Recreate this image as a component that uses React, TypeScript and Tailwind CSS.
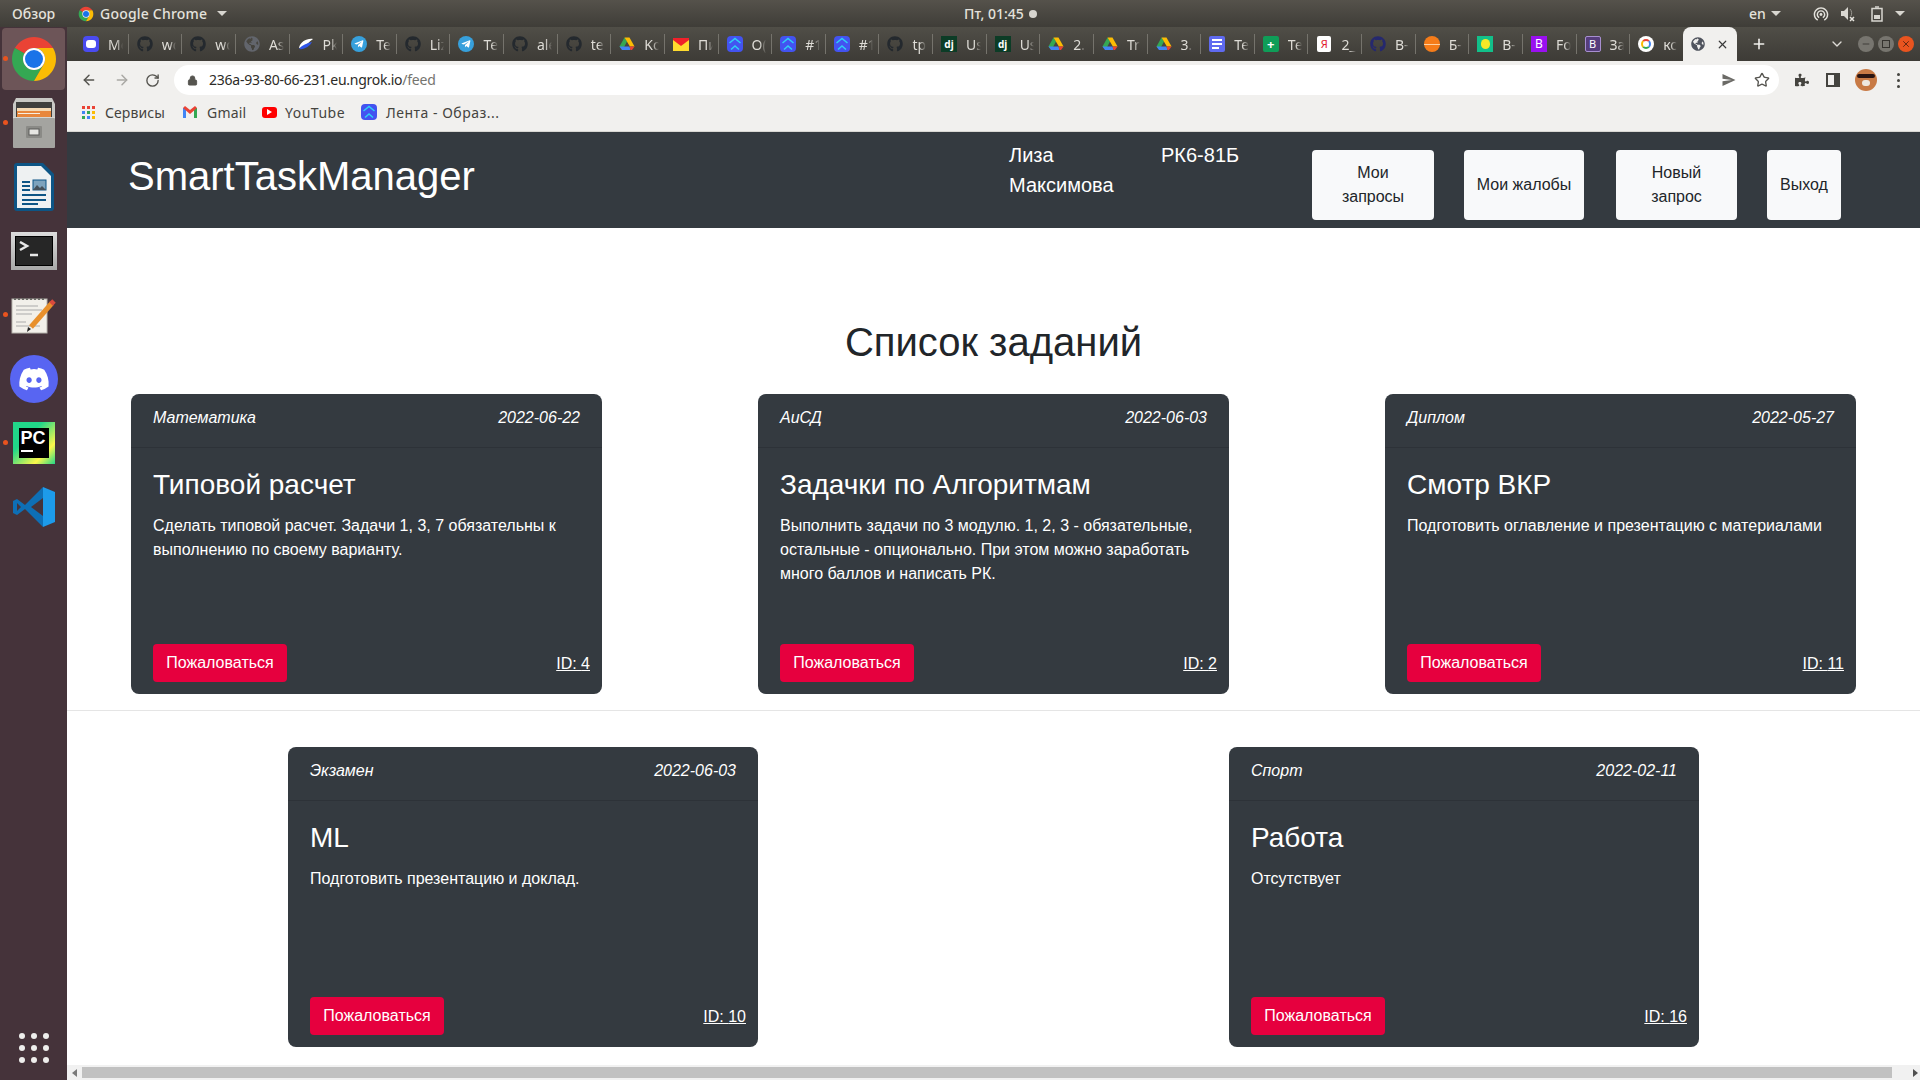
import { ArrowLeft, ArrowRight, ChevronDown, Lock, Minus, Plus, RotateCw, Star, X } from "lucide-react";
import { FaDiscord, FaGithub, FaPuzzlePiece, FaTelegramPlane, FaGlobeAmericas } from "react-icons/fa";
import { IoMdSend, IoMdWifi } from "react-icons/io";
import type { ReactNode } from "react";

const ui = "font-['Noto_Sans',sans-serif]";

function ChromeIcon({ size }: { size: number }) {
    return (
        <svg width={size} height={size} viewBox="0 0 48 48">
            <path fill="#ea4335" d="M4.95 13A22 22 0 0 1 43.05 13H24A11 11 0 0 0 14.47 18.5Z" />
            <path fill="#34a853" d="M4.95 13A22 22 0 0 0 24 46L33.53 29.5A11 11 0 0 1 14.47 18.5Z" />
            <path fill="#fbbc04" d="M24 46A22 22 0 0 0 43.05 13H24A11 11 0 0 1 33.53 29.5Z" />
            <circle cx="24" cy="24" r="11" fill="#fff" />
            <circle cx="24" cy="24" r="9" fill="#1a73e8" />
        </svg>
    );
}

function DriveIcon() {
    return (
        <svg width="16" height="16" viewBox="0 0 16 16">
            <path fill="#34a853" d="M5.5 1.5 8 5.5 3.5 14 .5 10.5Z" />
            <path fill="#fbbc04" d="M5.5 1.5h5l5 9h-4.6Z" />
            <path fill="#4285f4" d="M.5 10.5h10l1 3.5H3Z" />
            <path fill="#ea4335" d="M10.5 10.5h5L13 14h-1.5Z" />
        </svg>
    );
}

function ChevronsIcon() {
    return (
        <div className="w-4 h-4 rounded-[4px] bg-[#4353f0] flex items-center justify-center">
            <svg width="14" height="14" viewBox="0 0 14 14" fill="none" stroke="#2fd0f5" strokeWidth="1.5">
                <path d="M1.5 6 7 1.5 12.5 6" />
                <path d="M3 12.5 7 9l4 3.5" />
            </svg>
        </div>
    );
}

function TabIcon({ kind }: { kind: string }) {
    switch (kind) {
        case "chat":
            return (
                <div className="w-4 h-4 rounded-[4px] bg-[#4a4bf0] flex items-center justify-center">
                    <div className="w-[10px] h-2 rounded-[3px] bg-white" />
                </div>
            );
        case "github":
            return <FaGithub className="w-4 h-4 text-[#24292e]" />;
        case "globe":
            return <FaGlobeAmericas className="w-4 h-4 text-[#62656c]" />;
        case "pk":
            return (
                <svg width="16" height="16" viewBox="0 0 16 16">
                    <path fill="#fff" d="M1 12C2 6 9 2 15 3 12 5 7 11 1 12Z" />
                    <path fill="#2f55e8" d="M1 13C4 9 9 7 14 6 12 10 6 14 1 13Z" />
                </svg>
            );
        case "telegram":
            return (
                <div className="w-4 h-4 rounded-full bg-[#37a0dc] flex items-center justify-center">
                    <FaTelegramPlane className="w-[10px] h-[10px] text-white" />
                </div>
            );
        case "drive":
            return <DriveIcon />;
        case "ymail":
            return (
                <svg width="16" height="13" viewBox="0 0 16 13">
                    <rect width="16" height="13" fill="#ffdb2e" />
                    <path fill="#f0202a" d="M0 0h16v2L8 8 0 2Z" />
                </svg>
            );
        case "chevrons":
            return <ChevronsIcon />;
        case "dj":
            return <div className="w-4 h-4 bg-[#0c3c26] text-white text-[10px] font-bold leading-4 text-center">dj</div>;
        case "docs":
            return (
                <div className="w-4 h-4 rounded-[2px] bg-[#5f6af0] flex flex-col items-center justify-center gap-[2px]">
                    <div className="w-[10px] h-[2px] bg-white" />
                    <div className="w-[10px] h-[2px] bg-white" />
                    <div className="w-[7px] h-[2px] bg-white self-start ml-[3px]" />
                </div>
            );
        case "sheets":
            return <div className="w-4 h-4 rounded-[2px] bg-[#0f9d58] text-white text-[13px] font-bold leading-4 text-center">+</div>;
        case "yandex":
            return <div className="w-[14px] h-4 rounded-[2px] bg-white text-[#e1192d] text-[11px] leading-4 text-center">Я</div>;
        case "darkblob":
            return <FaGithub className="w-4 h-4 text-[#25286e]" />;
        case "orange":
            return (
                <div className="w-4 h-4 rounded-full bg-[#f57c1a] flex items-center">
                    <div className="w-full h-[1px] bg-[#ffd0a0]" />
                </div>
            );
        case "chick":
            return (
                <div className="w-4 h-4 bg-[#12c08a] flex items-center justify-center">
                    <div className="w-[9px] h-[10px] rounded-full bg-[#f6e826]" />
                </div>
            );
        case "bsolid":
            return <div className="w-4 h-4 bg-[#9a10f0] text-white text-[12px] leading-4 text-center">B</div>;
        case "boutline":
            return <div className="w-4 h-4 rounded-[2px] bg-[#563d7c] border border-[#a78fd0] text-white text-[11px] leading-[14px] text-center">B</div>;
        case "google":
            return (
                <div className="w-4 h-4 rounded-full bg-white flex items-center justify-center">
                    <div className="w-[10px] h-[10px] rounded-full border-2 border-t-[#ea4335] border-r-[#4285f4] border-b-[#34a853] border-l-[#fbbc04]" />
                </div>
            );
        default:
            return null;
    }
}

const tabs: [string, string][] = [
    ["chat", "Me"], ["github", "wo"], ["github", "wo"], ["globe", "As"], ["pk", "Pk"],
    ["telegram", "Te"], ["github", "Liz"], ["telegram", "Te"], ["github", "ale"], ["github", "te"],
    ["drive", "Ko"], ["ymail", "Пи"], ["chevrons", "O("], ["chevrons", "#1"], ["chevrons", "#1"],
    ["github", "tp"], ["dj", "Us"], ["dj", "Us"], ["drive", "2."], ["drive", "Tr"],
    ["drive", "3."], ["docs", "Те"], ["sheets", "Те"], ["yandex", "2_"], ["darkblob", "В-"],
    ["orange", "Б-"], ["chick", "В-"], ["bsolid", "Fo"], ["boutline", "За"], ["google", "кс"],
];

function Caret() {
    return <div className="w-0 h-0 border-x-[5px] border-x-transparent border-t-[5px] border-t-[#d8d6d0]" />;
}

function TopBar() {
    return (
        <div className={`${ui} h-[27px] flex items-center bg-gradient-to-b from-[#55524b] to-[#3f3d38] text-[#e4e2dc] text-[14px] font-medium`}>
            <span className="ml-3 w-[66px]">Обзор</span>
            <ChromeIcon size={16} />
            <span className="ml-[6px] w-[110px] whitespace-nowrap tracking-[0.2px]">Google Chrome</span>
            <div className="ml-[7px]"><Caret /></div>
            <div className="ml-[737px] w-[65px] whitespace-nowrap">Пт, 01:45</div>
            <div className="w-2 h-2 rounded-full bg-[#d8d6d0]" />
            <span className="ml-[712px] w-4">en</span>
            <div className="ml-[6px]"><Caret /></div>
            <IoMdWifi className="ml-[31px] w-[18px] h-[18px]" />
            <svg className="ml-[10px]" width="16" height="16" viewBox="0 0 16 16" fill="#d8d6d0">
                <path d="M1 5h3l4-4v13l-4-4H1Z" />
                <path d="M10 11l4 4m0-4-4 4" stroke="#e8e6e0" strokeWidth="1.5" />
                <path d="M10 3c2 2 2 5 1 7" fill="none" stroke="#9a9892" />
            </svg>
            <svg className="ml-[15px]" width="12" height="16" viewBox="0 0 12 16" fill="none" stroke="#d8d6d0" strokeWidth="1.5">
                <rect x="1" y="2.5" width="10" height="12.5" />
                <path d="M4 1h4" />
                <rect x="3" y="9" width="6" height="4" fill="#d8d6d0" stroke="none" />
            </svg>
            <div className="ml-3"><Caret /></div>
        </div>
    );
}

function TabStrip() {
    return (
        <div className={`${ui} h-[34px] flex items-center bg-gradient-to-b from-[#504e47] to-[#3d3b36] text-[#dedcd6] text-[14px]`}>
            <div className="w-[8px]" />
            {tabs.map(([kind, label], i) => (
                <div key={i} className="w-[53.63px] h-[20px] flex items-center border-r border-[#75736c] pl-2 pr-[5px] shrink-0">
                    <div className="w-4 flex justify-center shrink-0">
                        <TabIcon kind={kind} />
                    </div>
                    <span className="ml-[9px] overflow-hidden whitespace-nowrap [mask-image:linear-gradient(to_right,black_55%,transparent)]">{label}</span>
                </div>
            ))}
            <div className="ml-[-1px] self-stretch w-[54px] rounded-t-[8px] bg-[#f1f0ee] flex items-center justify-center gap-[11px]">
                <FaGlobeAmericas className="w-[14px] h-[14px] text-[#50545e]" />
                <X className="w-[13px] h-[13px] text-[#3a3a3a]" strokeWidth={2.2} />
            </div>
            <Plus className="ml-[14px] w-4 h-4 text-[#f0efeb]" strokeWidth={2.4} />
            <ChevronDown className="ml-[62px] w-4 h-4 text-[#dedcd6]" />
            <div className="ml-[13px] w-4 h-4 rounded-full bg-[#77756f] flex items-center justify-center">
                <Minus className="w-[10px] h-[10px] text-[#35332f]" />
            </div>
            <div className="ml-1 w-4 h-4 rounded-full bg-[#77756f] flex items-center justify-center">
                <div className="w-2 h-2 border border-[#35332f]" />
            </div>
            <div className="ml-1 w-4 h-4 rounded-full bg-[#e9541f] flex items-center justify-center">
                <X className="w-[10px] h-[10px] text-[#4c2010]" />
            </div>
        </div>
    );
}

function Toolbar() {
    return (
        <div className={`${ui} h-[34px] bg-[#f1f0ee] flex items-end text-[#45443f]`}>
            <div className="h-[30px] flex items-center">
                <ArrowLeft className="ml-[14px] w-4 h-4 text-[#55544f]" strokeWidth={2.2} />
                <ArrowRight className="ml-[17px] w-4 h-4 text-[#a9a8a4]" strokeWidth={2.2} />
                <RotateCw className="ml-[15px] w-[15px] h-[15px] text-[#55544f]" strokeWidth={2.2} />
            </div>
            <div className="ml-[14px] w-[1605px] h-[30px] rounded-full bg-white flex items-center">
                <Lock className="ml-[13px] w-[11px] h-[13px] text-[#55544f]" fill="#55544f" />
                <span className="ml-[11px] pb-[1px] text-[14px] tracking-[-0.25px] text-[#2c2b28]">
                    236a-93-80-66-231.eu.ngrok.io<span className="text-[#75746f]">/feed</span>
                </span>
                <IoMdSend className="ml-auto w-4 h-4 text-[#6b6a66]" />
                <Star className="ml-[17px] mr-[9px] w-4 h-4 text-[#55544f]" strokeWidth={2} />
            </div>
            <div className="h-[30px] flex items-center">
                <FaPuzzlePiece className="ml-[16px] w-[14px] h-[14px] text-[#45443f]" />
                <div className="ml-[17px] w-[14px] h-[14px] border-2 border-[#45443f] border-r-[6px]" />
                <div className="ml-[15px] w-[22px] h-[22px] rounded-full bg-[#c87a45] flex flex-col items-center justify-center overflow-hidden">
                    <div className="w-[18px] h-[4px] rounded-sm bg-[#2a1512]" />
                    <div className="mt-[2px] w-[8px] h-[6px] bg-[#eee8e0] rounded-full" />
                </div>
                <div className="ml-[20px] flex flex-col gap-[3px]">
                    <div className="w-[3px] h-[3px] rounded-full bg-[#45443f]" />
                    <div className="w-[3px] h-[3px] rounded-full bg-[#45443f]" />
                    <div className="w-[3px] h-[3px] rounded-full bg-[#45443f]" />
                </div>
            </div>
        </div>
    );
}

function Bookmarks() {
    const appColors = ["#ea4335", "#ea4335", "#ea4335", "#4285f4", "#34a853", "#fbbc04", "#34a853", "#4285f4", "#fbbc04"];
    return (
        <div className={`${ui} h-[37px] pb-[2px] bg-[#f1f0ee] border-b border-[#d8d7d3] flex items-center text-[14px] text-[#45443f]`}>
            <div className="ml-[15px] grid grid-cols-3 gap-[2px]">
                {appColors.map((c, i) => (
                    <div key={i} className="w-[3px] h-[3px]" style={{ backgroundColor: c }} />
                ))}
            </div>
            <span className="ml-[10px] w-[78px] tracking-[0.1px]">Сервисы</span>
            <svg width="14" height="12" viewBox="0 0 14 12">
                <path fill="#4285f4" d="M0 2h3v10H0Z" />
                <path fill="#34a853" d="M11 2h3v10h-3Z" />
                <path fill="#ea4335" d="M0 2l2-2 5 4 5-4 2 2-7 6Z" />
            </svg>
            <span className="ml-[10px] w-[55px] tracking-[0.2px]">Gmail</span>
            <div className="w-[15px] h-[11px] rounded-[3px] bg-[#f00] flex items-center justify-center">
                <div className="w-0 h-0 border-y-[3px] border-y-transparent border-l-[5px] border-l-white" />
            </div>
            <span className="ml-2 w-[76px] tracking-[0.5px]">YouTube</span>
            <ChevronsIcon />
            <span className="ml-[9px] tracking-[0.5px]">Лента - Образ...</span>
        </div>
    );
}

function Slot({ dot, active, children }: { dot?: boolean; active?: boolean; children: ReactNode }) {
    return (
        <div className="relative h-[64px] flex items-center justify-center">
            {active && <div className="absolute inset-x-[2px] inset-y-[1px] rounded-[4px] bg-[#6d5558]" />}
            {dot && <div className="absolute left-[3px] top-[29px] w-[5px] h-[5px] rounded-full bg-[#e9541f]" />}
            <div className="relative">{children}</div>
        </div>
    );
}

function Dock() {
    const dots = Array.from({ length: 9 });
    return (
        <div className="w-[67px] shrink-0 bg-[#45333a] flex flex-col">
            <Slot dot active>
                <ChromeIcon size={48} />
            </Slot>
            <Slot dot>
                <svg width="42" height="50" viewBox="0 0 42 50">
                    <path fill="#c9c9c5" d="M3 0h36l3 6v15H0V6Z" />
                    <path fill="#3f3f3d" d="M3 4h36v15H3Z" />
                    <path fill="#f4d9b4" d="M4 10h34v3H4Z" />
                    <path fill="#e8873c" d="M4 13h34v6H4Z" />
                    <path fill="#f6eee2" d="M5 15h22v1H5Z" />
                    <path fill="#d6d6d2" d="M0 19h42v2H0Z" />
                    <rect y="20" width="42" height="30" rx="1" fill="#a4a4a0" />
                    <rect x="13" y="28" width="16" height="12" rx="1" fill="#8a8a86" />
                    <rect x="16" y="31" width="10" height="6" fill="#e6e6e2" stroke="#5a5a58" />
                </svg>
            </Slot>
            <Slot>
                <svg width="40" height="48" viewBox="0 0 40 48">
                    <path fill="#0d5585" d="M3 0h26l11 11v34a3 3 0 0 1-3 3H3a3 3 0 0 1-3-3V3a3 3 0 0 1 3-3Z" />
                    <path fill="#eef1f2" d="M3 3h24l10 10v32H3Z" />
                    <path fill="#0d5585" d="M8 18h8v2H8Zm0 4h8v2H8Zm0 4h8v2H8ZM8 31h24v2H8Zm0 5h24v2H8Zm0 4h16v2H8Z" />
                    <rect x="19" y="17" width="13" height="10" fill="#7da3bd" stroke="#0d5585" />
                    <path fill="#46515a" d="M19 27l4-5 3 3 2-2 4 4Z" />
                </svg>
            </Slot>
            <Slot>
                <div className="w-[46px] h-[38px] bg-gradient-to-b from-[#dcdcdc] to-[#a8a8a8] flex items-center justify-center">
                    <div className="w-[38px] h-[30px] bg-[#262626] border border-black pl-[3px] pt-1">
                        <svg width="26" height="18" viewBox="0 0 26 18" fill="none" stroke="#e8e8e8" strokeWidth="2.5">
                            <path d="M1 1l7 4-7 4M11 14h8" />
                        </svg>
                    </div>
                </div>
            </Slot>
            <Slot dot>
                <svg width="46" height="38" viewBox="0 0 46 38">
                    <rect x="1" y="3" width="35" height="34" fill="#f2f0ea" stroke="#b8b6ae" />
                    <path stroke="#6b6b66" strokeWidth="2" strokeDasharray="2 2" d="M3 3h32" />
                    <path stroke="#aaa" d="M5 10h22M5 14h26M5 18h16M5 26h10M5 30h24" />
                    <path stroke="#e8902c" strokeWidth="5" d="M20 31 41 7" />
                    <path stroke="#d94a3d" strokeWidth="5" d="M40 8l3-3" />
                    <path fill="#222" d="M16 36l1-5 3 2Z" />
                </svg>
            </Slot>
            <Slot>
                <div className="w-12 h-12 rounded-full bg-[#5865f2] flex items-center justify-center">
                    <FaDiscord className="w-8 h-8 text-white" />
                </div>
            </Slot>
            <Slot dot>
                <div className="w-[42px] h-[42px] bg-[linear-gradient(135deg,#21d789_35%,#fcf84a_75%,#21d789_100%)] flex items-center justify-center">
                    <div className="w-[30px] h-[30px] bg-black text-white font-['Liberation_Sans',sans-serif] font-bold text-[18px] leading-[18px] px-[2px] pt-[1px]">
                        PC
                        <div className="mt-[3px] w-[12px] h-[2px] bg-white" />
                    </div>
                </div>
            </Slot>
            <Slot>
                <svg width="42" height="42" viewBox="0 0 42 42">
                    <path fill="#0e6fb5" d="M30 1 12 19 4 13 0 15v12l4 2 8-6 18 18Z" />
                    <path fill="#1d9bea" d="M30 1l12 5v30l-12 5Z" />
                    <path fill="#45333a" d="M30 12 18 21l12 9Z" />
                    <path fill="#45333a" d="M4 17v8l4-4Z" />
                </svg>
            </Slot>
            <div className="mt-auto mb-[17px] mx-auto grid grid-cols-3 gap-[6px]">
                {dots.map((_, i) => (
                    <div key={i} className="w-[6px] h-[6px] rounded-full bg-[#eeeeec]" />
                ))}
            </div>
        </div>
    );
}

function NavBtn({ className, children }: { className: string; children: ReactNode }) {
    return (
        <button className={`h-[70px] mt-[18px] rounded-[4px] bg-[#f8f9fa] text-[#212529] text-[16px] leading-6 text-center ${className}`}>
            {children}
        </button>
    );
}

function Navbar() {
    return (
        <header className="h-[96px] shrink-0 bg-[#343a40] text-white flex items-start text-[20px] leading-[30px]">
            <div className="ml-[61px] mt-5 text-[40px] leading-[48px] w-[881px]">SmartTaskManager</div>
            <div className="mt-2 w-[152px]">Лиза Максимова</div>
            <div className="mt-2 w-[151px]">РК6-81Б</div>
            <NavBtn className="w-[122px]">Мои<br />запросы</NavBtn>
            <NavBtn className="ml-[30px] w-[120px]">Мои жалобы</NavBtn>
            <NavBtn className="ml-[32px] w-[121px]">Новый<br />запрос</NavBtn>
            <NavBtn className="ml-[30px] w-[74px]">Выход</NavBtn>
        </header>
    );
}

type Task = { subject: string; date: string; title: string; text: string; id: number };

function TaskCard({ task, width }: { task: Task; width: string }) {
    return (
        <div className={`${width} h-[300px] rounded-[8px] bg-[#343a40] text-white flex flex-col`}>
            <div className="h-[54px] shrink-0 border-b border-black/[.125] pl-[22px] pr-[22px] pb-[6px] flex items-center justify-between italic text-[16px]">
                <span>{task.subject}</span>
                <span>{task.date}</span>
            </div>
            <div className="flex-1 pl-[22px] pr-[22px] pt-5">
                <h5 className="text-[28px] leading-[34px] mb-3">{task.title}</h5>
                <p className="text-[16px] leading-6">{task.text}</p>
            </div>
            <div className="flex items-center justify-between pl-[22px] pr-3 pb-3">
                <button className="w-[134px] h-[38px] rounded-[4px] bg-[#e6003e] text-white text-[16px]">Пожаловаться</button>
                <a href="#" className="underline text-[16px] pt-[1px]">ID: {task.id}</a>
            </div>
        </div>
    );
}

const row1: Task[] = [
    { subject: "Математика", date: "2022-06-22", title: "Типовой расчет", text: "Сделать типовой расчет. Задачи 1, 3, 7 обязательны к выполнению по своему варианту.", id: 4 },
    { subject: "АиСД", date: "2022-06-03", title: "Задачки по Алгоритмам", text: "Выполнить задачи по 3 модулю. 1, 2, 3 - обязательные, остальные - опционально. При этом можно заработать много баллов и написать РК.", id: 2 },
    { subject: "Диплом", date: "2022-05-27", title: "Смотр ВКР", text: "Подготовить оглавление и презентацию с материалами", id: 11 },
];

const row2: Task[] = [
    { subject: "Экзамен", date: "2022-06-03", title: "ML", text: "Подготовить презентацию и доклад.", id: 10 },
    { subject: "Спорт", date: "2022-02-11", title: "Работа", text: "Отсутствует", id: 16 },
];

function Scrollbar() {
    return (
        <div className="h-[15px] shrink-0 bg-[#f1f1f1] flex items-center">
            <div className="ml-[5px] w-0 h-0 border-y-[4px] border-y-transparent border-r-[5px] border-r-[#7a7a7a]" />
            <div className="ml-[5px] w-[1810px] h-[11px] bg-[#c1c1c1]" />
            <div className="ml-[21px] w-0 h-0 border-y-[4px] border-y-transparent border-l-[5px] border-l-[#505050]" />
        </div>
    );
}

export default function App() {
    return (
        <div className="w-[1920px] h-[1080px] overflow-hidden flex flex-col bg-white font-['Liberation_Sans',sans-serif] text-[#212529]">
            <TopBar />
            <div className="flex-1 flex min-h-0">
                <Dock />
                <div className="flex-1 flex flex-col min-w-0">
                    <TabStrip />
                    <Toolbar />
                    <Bookmarks />
                    <Navbar />
                    <main className="flex-1 pt-[90px]">
                        <h1 className="text-[40px] leading-[48px] text-center mb-[28px]">Список заданий</h1>
                        <div className="flex justify-between px-[64px]">
                            {row1.map((t) => <TaskCard key={t.id} task={t} width="w-[471px]" />)}
                        </div>
                        <div className="mt-4 border-t border-[#e5e5e5]" />
                        <div className="mt-9 flex justify-between px-[221px]">
                            {row2.map((t) => <TaskCard key={t.id} task={t} width="w-[470px]" />)}
                        </div>
                    </main>
                    <Scrollbar />
                </div>
            </div>
        </div>
    );
}
